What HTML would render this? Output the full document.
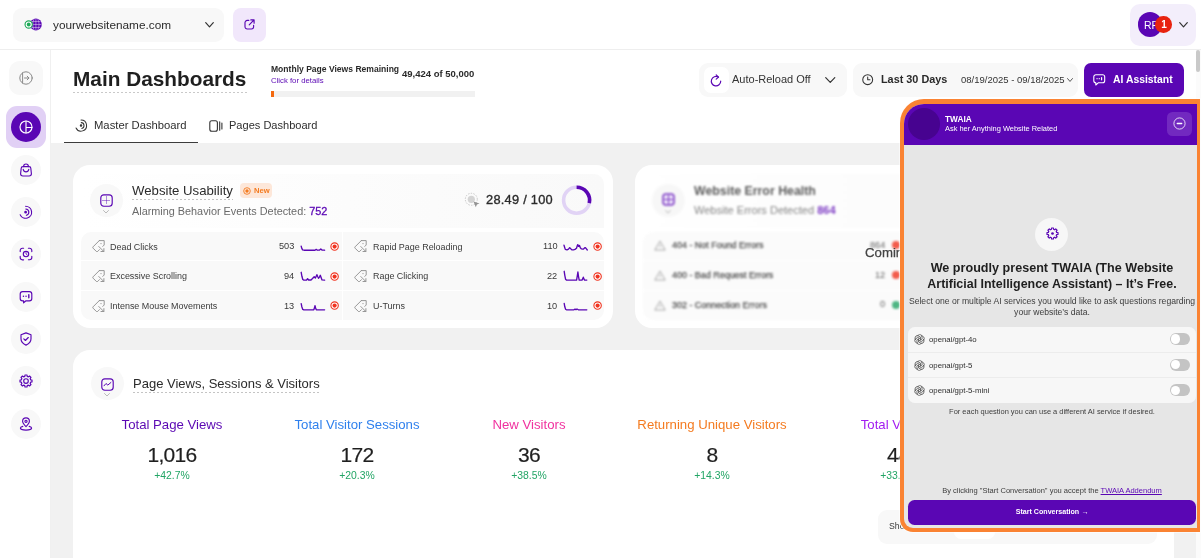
<!DOCTYPE html>
<html lang="en">
<head>
<meta charset="utf-8">
<title>Main Dashboards</title>
<style>
*{box-sizing:border-box;margin:0;padding:0}
html,body{width:1201px;height:558px;overflow:hidden;background:#fff}
body{font-family:"Liberation Sans",sans-serif;color:#252525;position:relative}
.abs{position:absolute}
.t{position:absolute;white-space:nowrap;line-height:1;will-change:transform}
.c{transform:translateX(-50%)}
svg{display:block;overflow:visible}
.card{position:absolute;background:#fff;border-radius:17px}
.sb{position:absolute;border-radius:50%;background:#f8f8f8}
</style>
</head>
<body>
<!-- TOP BAR -->
<div class="abs" style="left:0.00px;top:0.00px;width:1201.00px;height:50.00px;background:#fff;border-bottom:1px solid #eeeeee;"></div>
<div class="abs" style="left:13.00px;top:8.00px;width:211.00px;height:33.50px;background:#f8f8f8;border-radius:9px;"></div>
<div class="abs" style="left:233.00px;top:8.00px;width:33.00px;height:33.50px;background:#f1e7fb;border-radius:8px;"></div>
<div class="abs" style="left:1130.00px;top:4.00px;width:66.00px;height:42.00px;background:#f3eefb;border-radius:10px;"></div>
<svg class="abs" style="left:23.90px;top:18.10px" width="19" height="13" viewBox="0 0 19 13" ><circle cx="11.900" cy="6.500" r="5.900" fill="#5a06b4"/>
<path d="M11.900 .8v11.400M6.200 6.500h11.400M7.400 3.500h9M7.400 9.500h9M10 1.100c-1.700 3.500-1.700 7.300 0 10.800M13.800 1.100c1.700 3.500 1.700 7.300 0 10.800" fill="none" stroke="#fff" stroke-width=".5" opacity=".85"/>
<circle cx="4.700" cy="6.500" r="3.650" fill="#fff" stroke="#1faa59" stroke-width="1.150"/><circle cx="4.700" cy="6.500" r="1.900" fill="#1faa59"/></svg>
<div class="t" style="left:52.90px;top:19.50px;font-size:11.8px;color:#2b2b2b;">yourwebsitename.com</div>
<svg class="abs" style="left:204.50px;top:22.00px" width="9" height="5.5" viewBox="0 0 9 5.5" ><path d="M0.70 0.70L4.50 4.80L8.30 0.70" fill="none" stroke="#333" stroke-width="1.2" stroke-linecap="round" stroke-linejoin="round"/></svg>
<svg class="abs" style="left:244.00px;top:19.00px" width="11" height="11" viewBox="0 0 11 11" ><path d="M4.800 1.400H3.200A2.200 2.200 0 0 0 1 3.600v4.200A2.200 2.200 0 0 0 3.200 10h4.200a2.200 2.200 0 0 0 2.200-2.200V6.200M5.200 5.800l4.600-4.600M6.800.900h3.300v3.300" fill="none" stroke="#5a06b4" stroke-width="1.150" stroke-linecap="round" stroke-linejoin="round"/></svg>
<div class="abs" style="left:1138.00px;top:12.40px;width:24.40px;height:24.40px;background:#5a06b4;border-radius:50%;"></div>
<div class="t" style="left:1144.30px;top:19.65px;font-size:10.5px;color:#fff;">RF</div>
<div class="abs" style="left:1155.40px;top:16.30px;width:16.60px;height:16.60px;background:#e8230f;border-radius:50%;"></div>
<div class="t c" style="left:1163.70px;top:20.30px;font-size:10px;font-weight:700;color:#fff;">1</div>
<svg class="abs" style="left:1178.50px;top:22.00px" width="9" height="5.5" viewBox="0 0 9 5.5" ><path d="M0.70 0.70L4.50 4.80L8.30 0.70" fill="none" stroke="#333" stroke-width="1.2" stroke-linecap="round" stroke-linejoin="round"/></svg>
<!-- SIDEBAR -->
<div class="abs" style="left:0.00px;top:50.00px;width:51.00px;height:508.00px;background:#fff;border-right:1px solid #f0f0f0;"></div>
<div class="abs" style="left:9.00px;top:60.50px;width:33.70px;height:34.50px;background:#f8f8f8;border-radius:11px;"></div>
<svg class="abs" style="left:17.70px;top:69.60px" width="16" height="16" viewBox="0 0 16 16" fill="none" stroke="#8a8a8a" stroke-width="1" stroke-linecap="round" stroke-linejoin="round"><circle cx="8" cy="8" r="6.200"/><path d="M4.600 2.900v10.200M6.500 8h4.300M9.200 6.200L11 8l-1.800 1.800"/></svg>
<div class="abs" style="left:5.50px;top:106.20px;width:40.70px;height:41.80px;background:#e1d0f5;border-radius:11px;"></div>
<div class="abs" style="left:10.70px;top:112.00px;width:30.00px;height:30.00px;background:#5a06b4;border-radius:50%;"></div>
<svg class="abs" style="left:17.70px;top:119.00px" width="16" height="16" viewBox="0 0 16 16" fill="none" stroke="#fff" stroke-width="1.150" stroke-linecap="round" stroke-linejoin="round"><circle cx="8" cy="8" r="6"/><path d="M8 2v12M8 8.500h6"/></svg>
<div class="sb" style="left:10.7px;top:154.5px;width:30px;height:30px"></div>
<svg class="abs" style="left:17.70px;top:161.50px" width="16" height="16" viewBox="0 0 16 16" fill="none" stroke="#5a06b4" stroke-width="1.150" stroke-linecap="round" stroke-linejoin="round"><path d="M3.200 6.200c0-1 .8-1.600 1.800-1.600h6c1 0 1.800.6 1.800 1.600l.6 5.600c0 1.300-1 2.200-2.300 2.200H4.900c-1.300 0-2.300-.9-2.300-2.200z"/><path d="M5.600 4.600c0-1.500 1-2.600 2.400-2.600s2.400 1.100 2.400 2.600M5.200 7.400c.3 1.500 1.400 2.400 2.800 2.400s2.500-.9 2.800-2.400"/></svg>
<div class="sb" style="left:10.7px;top:197.0px;width:30px;height:30px"></div>
<svg class="abs" style="left:17.70px;top:204.00px" width="16" height="16" viewBox="0 0 16 16" fill="none" stroke="#5a06b4" stroke-width="1.150" stroke-linecap="round" stroke-linejoin="round"><path d="M7.600 2.200a6 6 0 1 1-5.400 8.600"/><path d="M7.800 5a3.200 3.200 0 0 1 .6 6.300"/><circle cx="7.600" cy="8.200" r=".8" fill="#5a06b4"/></svg>
<div class="sb" style="left:10.7px;top:239.3px;width:30px;height:30px"></div>
<svg class="abs" style="left:17.70px;top:246.30px" width="16" height="16" viewBox="0 0 16 16" fill="none" stroke="#5a06b4" stroke-width="1.150" stroke-linecap="round" stroke-linejoin="round"><path d="M2.200 5.600V4.400a2.200 2.200 0 0 1 2.200-2.200h1.200M10.400 2.200h1.200a2.200 2.200 0 0 1 2.200 2.200v1.200M13.800 10.400v1.200a2.200 2.200 0 0 1-2.200 2.200h-1.200M5.600 13.800H4.400a2.200 2.200 0 0 1-2.200-2.200v-1.200"/><circle cx="8" cy="8" r="2.700"/><path d="M8 6.600V8l1 .6" stroke-width=".8"/></svg>
<div class="sb" style="left:10.7px;top:281.6px;width:30px;height:30px"></div>
<svg class="abs" style="left:17.70px;top:288.60px" width="16" height="16" viewBox="0 0 16 16" fill="none" stroke="#5a06b4" stroke-width="1.150" stroke-linecap="round" stroke-linejoin="round"><path d="M4.600 2.600h6.800a2.400 2.400 0 0 1 2.400 2.400v4.400a2.400 2.400 0 0 1-2.400 2.400H8l-2.400 2v-2h-1a2.400 2.400 0 0 1-2.400-2.400V5a2.400 2.400 0 0 1 2.400-2.400z"/><path d="M5.400 7.300h.1M8 7.300h.1M10.800 5.800v3" stroke-width="1.400"/></svg>
<div class="sb" style="left:10.7px;top:324.0px;width:30px;height:30px"></div>
<svg class="abs" style="left:17.70px;top:331.00px" width="16" height="16" viewBox="0 0 16 16" fill="none" stroke="#5a06b4" stroke-width="1.150" stroke-linecap="round" stroke-linejoin="round"><path d="M8 1.900l5 1.900v4c0 3-2.100 5.100-5 6.300-2.900-1.200-5-3.300-5-6.300v-4z"/><path d="M5.800 7.900l1.600 1.600 2.900-3"/></svg>
<div class="sb" style="left:10.7px;top:366.2px;width:30px;height:30px"></div>
<svg class="abs" style="left:17.70px;top:373.20px" width="16" height="16" viewBox="0 0 16 16" fill="none" stroke="#5a06b4" stroke-width="1.150" stroke-linecap="round" stroke-linejoin="round"><circle cx="8" cy="8" r="2.300"/><path d="M6.95 1.99L9.05 1.99L9.19 3.35L10.44 3.87L11.51 3.01L12.99 4.49L12.13 5.56L12.65 6.81L14.01 6.95L14.01 9.05L12.65 9.19L12.13 10.44L12.99 11.51L11.51 12.99L10.44 12.13L9.19 12.65L9.05 14.01L6.95 14.01L6.81 12.65L5.56 12.13L4.49 12.99L3.01 11.51L3.87 10.44L3.35 9.19L1.99 9.05L1.99 6.95L3.35 6.81L3.87 5.56L3.01 4.49L4.49 3.01L5.56 3.87L6.81 3.35Z"/></svg>
<div class="sb" style="left:10.7px;top:408.5px;width:30px;height:30px"></div>
<svg class="abs" style="left:17.70px;top:415.50px" width="16" height="16" viewBox="0 0 16 16" fill="none" stroke="#5a06b4" stroke-width="1.150" stroke-linecap="round" stroke-linejoin="round"><path d="M8 10.600c2-2 3.400-3.500 3.400-5.300A3.400 3.400 0 0 0 8 1.900a3.400 3.400 0 0 0-3.400 3.400c0 1.800 1.400 3.300 3.400 5.300z"/><circle cx="8" cy="5.300" r="1.100"/><path d="M4.800 10.400c-1.500.4-2.400 1-2.400 1.700 0 1.200 2.500 2 5.600 2s5.600-.8 5.600-2c0-.7-.9-1.300-2.400-1.700"/></svg>
<!-- MAIN -->
<div class="abs" style="left:51.00px;top:50.00px;width:1144.80px;height:93.00px;background:#fff;"></div>
<div class="abs" style="left:51.00px;top:143.00px;width:1144.80px;height:415.00px;background:#f1f1f1;"></div>
<div class="abs" style="left:1195.80px;top:50.00px;width:5.20px;height:508.00px;background:#fbfbfb;"></div>
<div class="abs" style="left:1196.30px;top:50.00px;width:3.90px;height:22.00px;background:#c9c9c9;border-radius:2px;"></div>
<!-- HEADER -->
<div class="t" style="left:72.50px;top:69.20px;font-size:20.8px;font-weight:700;color:#1f1f1f;">Main Dashboards</div>
<div class="abs" style="left:72.50px;top:92.00px;width:174.00px;height:1.00px;background:repeating-linear-gradient(90deg,#c9c9c9 0 2px,transparent 2px 4px);"></div>
<div class="t" style="left:270.80px;top:64.52px;font-size:8.55px;font-weight:700;color:#2a2a2a;">Monthly Page Views Remaining</div>
<div class="t" style="left:270.80px;top:76.83px;font-size:7.75px;color:#5a06b4;">Click for details</div>
<div class="t" style="left:402.00px;top:69.35px;font-size:9.5px;font-weight:700;color:#2a2a2a;">49,424 of 50,000</div>
<div class="abs" style="left:270.50px;top:90.80px;width:204.00px;height:6.00px;background:#f1f1f1;"></div>
<div class="abs" style="left:270.50px;top:90.80px;width:3.00px;height:6.00px;background:#f4690f;"></div>
<svg class="abs" style="left:73.90px;top:118.00px" width="14.8" height="14.8" viewBox="0 0 16 16" fill="none" stroke="#333" stroke-width="1.100" stroke-linecap="round"><path d="M7.600 2.200a6 6 0 1 1-5.400 8.600"/><path d="M7.800 5a3.200 3.200 0 0 1 .6 6.300"/><circle cx="7.600" cy="8.200" r=".8" fill="#333"/></svg>
<div class="t" style="left:94.00px;top:119.97px;font-size:11.25px;color:#2e2e2e;">Master Dashboard</div>
<div class="abs" style="left:64.20px;top:142.00px;width:134.00px;height:1.00px;background:#3c3c3c;"></div>
<svg class="abs" style="left:208.60px;top:119.50px" width="14" height="12" viewBox="0 0 14 12" fill="none" stroke="#333" stroke-width="1.100" stroke-linecap="round"><rect x=".8" y=".8" width="7.600" height="10.400" rx="2"/><path d="M10.700 1.800v8.400M12.900 3v6"/></svg>
<div class="t" style="left:228.50px;top:120.07px;font-size:11.05px;color:#2e2e2e;">Pages Dashboard</div>
<div class="abs" style="left:699.30px;top:62.70px;width:147.40px;height:34.00px;background:#f8f8f8;border-radius:9px;"></div>
<div class="abs" style="left:704.00px;top:67.30px;width:25.00px;height:25.40px;background:#fff;border-radius:7px;"></div>
<svg class="abs" style="left:710.30px;top:73.50px" width="12" height="13" viewBox="0 0 12 13" fill="none" stroke="#5a06b4" stroke-width="1.200" stroke-linecap="round" stroke-linejoin="round"><path d="M8.300 3.100A4.700 4.700 0 1 0 10.700 7.200"/><path d="M6.200 .8l2.300 2.300-2.300 2"/></svg>
<div class="t" style="left:732.30px;top:74.30px;font-size:11px;color:#333;">Auto-Reload Off</div>
<svg class="abs" style="left:825.00px;top:77.20px" width="10.5" height="6" viewBox="0 0 10.5 6" ><path d="M0.70 0.70L5.25 5.30L9.80 0.70" fill="none" stroke="#333" stroke-width="1.2" stroke-linecap="round" stroke-linejoin="round"/></svg>
<div class="abs" style="left:852.70px;top:62.70px;width:225.60px;height:34.00px;background:#f8f8f8;border-radius:9px;"></div>
<svg class="abs" style="left:862.30px;top:74.30px" width="11.4" height="11.4" viewBox="0 0 12 12" fill="none" stroke="#333" stroke-width="1.100" stroke-linecap="round" stroke-linejoin="round"><circle cx="6" cy="6" r="5.200"/><path d="M6 3.200V6h2.400"/></svg>
<div class="t" style="left:880.70px;top:74.38px;font-size:10.85px;font-weight:700;color:#2a2a2a;">Last 30 Days</div>
<div class="t" style="left:961.30px;top:75.25px;font-size:9.5px;color:#333;">08/19/2025 - 09/18/2025</div>
<svg class="abs" style="left:1066.50px;top:78.30px" width="6" height="4" viewBox="0 0 6 4" ><path d="M0.55 0.55L3.00 3.45L5.45 0.55" fill="none" stroke="#444" stroke-width="0.9" stroke-linecap="round" stroke-linejoin="round"/></svg>
<div class="abs" style="left:1084.00px;top:62.70px;width:99.60px;height:34.00px;background:#5a06b4;border-radius:7px;"></div>
<svg class="abs" style="left:1093.00px;top:74.00px" width="12.5" height="12" viewBox="0 0 12.5 12" fill="none" stroke="#fff" stroke-width="1.100" stroke-linecap="round" stroke-linejoin="round"><path d="M2.800.800h6.900a2 2 0 0 1 2 2v3.900a2 2 0 0 1-2 2H5.500l-2.700 2.300V8.700a2 2 0 0 1-2-2V2.800a2 2 0 0 1 2-2z"/><path d="M4 4.700h.1M6.200 4.700h.1M8.600 3.700v2.100" stroke-width="1.200"/></svg>
<div class="t" style="left:1113.00px;top:74.60px;font-size:10.4px;font-weight:700;color:#fff;">AI Assistant</div>
<!-- CARD 1 -->
<div class="card" style="left:72.5px;top:165px;width:540px;height:163px"></div>
<div class="abs" style="left:81.00px;top:174.00px;width:523.00px;height:54.00px;background:linear-gradient(90deg,#ffffff 0%,#fdfdfd 35%,#f9f9f9 100%);border-radius:10px 10px 0 0;"></div>
<div class="abs" style="left:89.50px;top:184.00px;width:33.00px;height:33.00px;background:#f8f8f8;border-radius:50%;"></div>
<svg class="abs" style="left:99.50px;top:193.50px" width="13" height="13" viewBox="0 0 13 13" fill="none" stroke="#5a06b4" stroke-width="1.150"><rect x=".8" y=".8" width="11.400" height="11.400" rx="3"/><path d="M6.500 2.500v8M2.500 6.500h8" stroke-width=".9" stroke-dasharray="1 1"/></svg>
<svg class="abs" style="left:103.00px;top:209.50px" width="6" height="3.5" viewBox="0 0 6 3.5" ><path d="M0.50 0.50L3.00 3.00L5.50 0.50" fill="none" stroke="#aaa" stroke-width="0.8" stroke-linecap="round" stroke-linejoin="round"/></svg>
<div class="t" style="left:132.00px;top:183.90px;font-size:13.2px;color:#2b2b2b;">Website Usability</div>
<div class="abs" style="left:132.00px;top:198.60px;width:101.00px;height:1.00px;background:repeating-linear-gradient(90deg,#c4c4c4 0 2px,transparent 2px 4px);"></div>
<div class="abs" style="left:240.00px;top:183.00px;width:32.00px;height:15.00px;background:#fde7d9;border-radius:4px;"></div>
<svg class="abs" style="left:243.30px;top:186.80px" width="8" height="8" viewBox="0 0 8 8" ><circle cx="4" cy="4" r="3.300" fill="none" stroke="#f47b20" stroke-width=".9"/><circle cx="4" cy="4" r="1.700" fill="#f47b20"/></svg>
<div class="t" style="left:253.80px;top:186.80px;font-size:7.6px;font-weight:700;color:#f47b20;">New</div>
<div class="t" style="left:132.00px;top:205.97px;font-size:10.85px;color:#6a6a6a;">Alarming Behavior Events Detected: <span style="color:#5a06b4;-webkit-text-stroke:.3px #5a06b4">752</span></div>
<svg class="abs" style="left:464.00px;top:192.00px" width="17" height="17" viewBox="0 0 17 17" fill="none"><circle cx="7.300" cy="7.300" r="6" stroke="#b9b9b9" stroke-width=".8" stroke-dasharray="1.400 1.300"/><circle cx="7.300" cy="7.300" r="3.600" fill="#d4d4d4"/><path d="M9.500 9.500l6 2-2.600 1.100-1.100 2.700z" fill="#929292"/></svg>
<div class="t" style="left:485.80px;top:194.30px;font-size:12.8px;color:#2b2b2b;letter-spacing:.27px;-webkit-text-stroke:.35px #2b2b2b;">28.49 / 100</div>
<svg class="abs" style="left:0;top:0" width="1201" height="558" fill="none"><circle cx="576.6" cy="200.2" r="13.0" stroke="#e1d3f5" stroke-width="3.600"/><path d="M576.6 187.2A13.0 13.0 0 0 1 589.29 203.03" stroke="#5a06b4" stroke-width="3.600"/></svg>
<div class="abs" style="left:81.00px;top:232.00px;width:260.70px;height:28.40px;background:#f9f9f9;border-radius:10px 0 0 0;"></div>
<svg class="abs" style="left:91.50px;top:240.35px" width="13" height="12.5" viewBox="0 0 13 12.5" fill="none" stroke="#8b8b8b" stroke-width=".9" stroke-linecap="round" stroke-linejoin="round"><path d="M7.300 .6h4.900v4.400l-1.400 1.400M7.300 .6L1.100 6.800a1 1 0 0 0 0 1.400L4.300 11.400a1 1 0 0 0 1.400 0L7.500 9.600M6.800 6.500l4.900 4.900M11.900 8.600v2.900h-2.900"/><circle cx="9" cy="3.600" r=".55" fill="#8b8b8b" stroke="none"/></svg>
<div class="t" style="left:109.90px;top:242.58px;font-size:8.95px;color:#3a3a3a;">Dead Clicks</div>
<div class="t" style="right:906.70px;top:242.35px;font-size:9.2px;color:#3a3a3a;">503</div>
<svg class="abs" style="left:0;top:0" width="1201" height="558"><path d="M301.2 246.2 L301.8 248.4 L302.6 249.9 L304.0 250.2 L315.0 250.2 L316.2 249.4 L317.4 250.2 L319.6 250.1 L320.8 248.9 L322.0 250.1 L324.6 250.2" fill="none" stroke="#5a06b4" stroke-width="1.350" stroke-linejoin="round" stroke-linecap="round"/></svg>
<svg class="abs" style="left:329.70px;top:241.65px" width="9.2" height="9.2" viewBox="0 0 9.2 9.2" ><circle cx="4.600" cy="4.600" r="3.700" fill="#fff" stroke="#f03420" stroke-width="1.100"/><circle cx="4.600" cy="4.600" r="2.100" fill="#f03420"/></svg>
<div class="abs" style="left:81.00px;top:261.30px;width:260.70px;height:28.80px;background:#f9f9f9;border-radius:0;"></div>
<svg class="abs" style="left:91.50px;top:270.20px" width="13" height="12.5" viewBox="0 0 13 12.5" fill="none" stroke="#8b8b8b" stroke-width=".9" stroke-linecap="round" stroke-linejoin="round"><path d="M7.300 .6h4.900v4.400l-1.400 1.400M7.300 .6L1.100 6.800a1 1 0 0 0 0 1.400L4.300 11.400a1 1 0 0 0 1.400 0L7.500 9.600M6.800 6.500l4.900 4.900M11.900 8.600v2.900h-2.900"/><circle cx="9" cy="3.600" r=".55" fill="#8b8b8b" stroke="none"/></svg>
<div class="t" style="left:109.90px;top:272.43px;font-size:8.95px;color:#3a3a3a;">Excessive Scrolling</div>
<div class="t" style="right:906.70px;top:272.20px;font-size:9.2px;color:#3a3a3a;">94</div>
<svg class="abs" style="left:0;top:0" width="1201" height="558"><path d="M301.2 272.3 L301.9 276.3 L302.8 279.5 L303.8 280.1 L306.6 280.0 L307.6 278.7 L308.6 280.0 L311.0 280.0 L312.5 278.5 L314.2 276.7 L315.4 278.1 L316.9 274.7 L317.8 276.8 L318.5 278.3 L319.4 277.1 L320.3 275.3 L321.2 277.8 L322.0 279.9 L324.6 280.1" fill="none" stroke="#5a06b4" stroke-width="1.350" stroke-linejoin="round" stroke-linecap="round"/></svg>
<svg class="abs" style="left:329.70px;top:271.50px" width="9.2" height="9.2" viewBox="0 0 9.2 9.2" ><circle cx="4.600" cy="4.600" r="3.700" fill="#fff" stroke="#f03420" stroke-width="1.100"/><circle cx="4.600" cy="4.600" r="2.100" fill="#f03420"/></svg>
<div class="abs" style="left:81.00px;top:291.00px;width:260.70px;height:29.00px;background:#f9f9f9;border-radius:0 0 0 10px;"></div>
<svg class="abs" style="left:91.50px;top:299.90px" width="13" height="12.5" viewBox="0 0 13 12.5" fill="none" stroke="#8b8b8b" stroke-width=".9" stroke-linecap="round" stroke-linejoin="round"><path d="M7.300 .6h4.900v4.400l-1.400 1.400M7.300 .6L1.100 6.800a1 1 0 0 0 0 1.400L4.300 11.400a1 1 0 0 0 1.400 0L7.500 9.600M6.800 6.500l4.900 4.900M11.900 8.600v2.900h-2.900"/><circle cx="9" cy="3.600" r=".55" fill="#8b8b8b" stroke="none"/></svg>
<div class="t" style="left:109.90px;top:302.12px;font-size:8.95px;color:#3a3a3a;">Intense Mouse Movements</div>
<div class="t" style="right:906.70px;top:301.90px;font-size:9.2px;color:#3a3a3a;">13</div>
<svg class="abs" style="left:0;top:0" width="1201" height="558"><path d="M301.2 303.7 L301.9 307.0 L302.8 309.4 L303.8 309.8 L313.8 309.8 L314.5 307.8 L315.0 305.6 L315.6 308.0 L316.3 309.8 L324.6 309.8" fill="none" stroke="#5a06b4" stroke-width="1.350" stroke-linejoin="round" stroke-linecap="round"/></svg>
<svg class="abs" style="left:329.70px;top:301.20px" width="9.2" height="9.2" viewBox="0 0 9.2 9.2" ><circle cx="4.600" cy="4.600" r="3.700" fill="#fff" stroke="#f03420" stroke-width="1.100"/><circle cx="4.600" cy="4.600" r="2.100" fill="#f03420"/></svg>
<div class="abs" style="left:343.40px;top:232.00px;width:261.00px;height:28.40px;background:#f9f9f9;border-radius:0 10px 0 0;"></div>
<svg class="abs" style="left:354.30px;top:240.35px" width="13" height="12.5" viewBox="0 0 13 12.5" fill="none" stroke="#8b8b8b" stroke-width=".9" stroke-linecap="round" stroke-linejoin="round"><path d="M7.300 .6h4.900v4.400l-1.400 1.400M7.300 .6L1.100 6.800a1 1 0 0 0 0 1.400L4.300 11.400a1 1 0 0 0 1.400 0L7.500 9.600M6.800 6.500l4.900 4.900M11.900 8.600v2.900h-2.900"/><circle cx="9" cy="3.600" r=".55" fill="#8b8b8b" stroke="none"/></svg>
<div class="t" style="left:372.50px;top:242.58px;font-size:8.95px;color:#3a3a3a;">Rapid Page Reloading</div>
<div class="t" style="right:643.70px;top:242.35px;font-size:9.2px;color:#3a3a3a;">110</div>
<svg class="abs" style="left:0;top:0" width="1201" height="558"><path d="M564.0 245.2 L564.6 247.2 L565.3 249.4 L567.0 249.8 L568.5 249.1 L569.7 247.6 L571.0 249.1 L571.8 249.8 L573.5 249.8 L575.0 249.4 L576.5 248.2 L577.3 245.6 L577.8 244.6 L578.6 246.4 L579.5 245.5 L580.3 247.8 L581.5 248.9 L583.0 249.2 L584.0 248.6 L585.1 247.6 L586.2 248.6 L587.3 250.0" fill="none" stroke="#5a06b4" stroke-width="1.350" stroke-linejoin="round" stroke-linecap="round"/></svg>
<svg class="abs" style="left:592.50px;top:241.65px" width="9.2" height="9.2" viewBox="0 0 9.2 9.2" ><circle cx="4.600" cy="4.600" r="3.700" fill="#fff" stroke="#f03420" stroke-width="1.100"/><circle cx="4.600" cy="4.600" r="2.100" fill="#f03420"/></svg>
<div class="abs" style="left:343.40px;top:261.30px;width:261.00px;height:28.80px;background:#f9f9f9;border-radius:0;"></div>
<svg class="abs" style="left:354.30px;top:270.20px" width="13" height="12.5" viewBox="0 0 13 12.5" fill="none" stroke="#8b8b8b" stroke-width=".9" stroke-linecap="round" stroke-linejoin="round"><path d="M7.300 .6h4.900v4.400l-1.400 1.400M7.300 .6L1.100 6.800a1 1 0 0 0 0 1.400L4.300 11.400a1 1 0 0 0 1.400 0L7.500 9.600M6.800 6.500l4.900 4.900M11.900 8.600v2.900h-2.900"/><circle cx="9" cy="3.600" r=".55" fill="#8b8b8b" stroke="none"/></svg>
<div class="t" style="left:372.50px;top:272.43px;font-size:8.95px;color:#3a3a3a;">Rage Clicking</div>
<div class="t" style="right:643.70px;top:272.20px;font-size:9.2px;color:#3a3a3a;">22</div>
<svg class="abs" style="left:0;top:0" width="1201" height="558"><path d="M564.2 271.3 L564.8 275.3 L565.6 279.3 L566.4 280.1 L576.6 280.1 L577.3 275.8 L577.9 272.0 L578.5 276.3 L579.2 280.1 L582.0 280.1 L582.8 278.7 L583.3 277.2 L583.9 278.9 L584.6 280.1 L586.8 280.1" fill="none" stroke="#5a06b4" stroke-width="1.350" stroke-linejoin="round" stroke-linecap="round"/></svg>
<svg class="abs" style="left:592.50px;top:271.50px" width="9.2" height="9.2" viewBox="0 0 9.2 9.2" ><circle cx="4.600" cy="4.600" r="3.700" fill="#fff" stroke="#f03420" stroke-width="1.100"/><circle cx="4.600" cy="4.600" r="2.100" fill="#f03420"/></svg>
<div class="abs" style="left:343.40px;top:291.00px;width:261.00px;height:29.00px;background:#f9f9f9;border-radius:0 0 10px 0;"></div>
<svg class="abs" style="left:354.30px;top:299.90px" width="13" height="12.5" viewBox="0 0 13 12.5" fill="none" stroke="#8b8b8b" stroke-width=".9" stroke-linecap="round" stroke-linejoin="round"><path d="M7.300 .6h4.900v4.400l-1.400 1.400M7.300 .6L1.100 6.800a1 1 0 0 0 0 1.400L4.300 11.400a1 1 0 0 0 1.400 0L7.500 9.600M6.800 6.500l4.900 4.900M11.900 8.600v2.900h-2.900"/><circle cx="9" cy="3.600" r=".55" fill="#8b8b8b" stroke="none"/></svg>
<div class="t" style="left:372.50px;top:302.12px;font-size:8.95px;color:#3a3a3a;">U-Turns</div>
<div class="t" style="right:643.70px;top:301.90px;font-size:9.2px;color:#3a3a3a;">10</div>
<svg class="abs" style="left:0;top:0" width="1201" height="558"><path d="M564.2 303.4 L564.8 306.8 L565.6 309.3 L566.4 309.8 L574.0 309.8 L575.0 309.1 L576.0 309.7 L577.0 309.0 L578.3 309.8 L586.8 309.8" fill="none" stroke="#5a06b4" stroke-width="1.350" stroke-linejoin="round" stroke-linecap="round"/></svg>
<svg class="abs" style="left:592.50px;top:301.20px" width="9.2" height="9.2" viewBox="0 0 9.2 9.2" ><circle cx="4.600" cy="4.600" r="3.700" fill="#fff" stroke="#f03420" stroke-width="1.100"/><circle cx="4.600" cy="4.600" r="2.100" fill="#f03420"/></svg>
<!-- CARD 2 (blurred, coming soon) -->
<div class="card" style="left:634.5px;top:165px;width:540px;height:163px"></div>
<div class="abs" style="left:0;top:0;width:1201px;height:558px;filter:blur(1.1px);opacity:.8">
<div class="abs" style="left:643.00px;top:174.00px;width:523.00px;height:54.00px;background:linear-gradient(90deg,#ffffff 0%,#fdfdfd 35%,#f9f9f9 100%);border-radius:10px 10px 0 0;"></div>
<div class="abs" style="left:651.50px;top:184.00px;width:33.00px;height:33.00px;background:#f6f6f6;border-radius:50%;"></div>
<svg class="abs" style="left:661.50px;top:193.30px" width="13" height="13" viewBox="0 0 13 13" ><rect x="1" y="1" width="11" height="11" rx="3" fill="#e9dcf8" stroke="#5a06b4" stroke-width="1.500"/><path d="M6.500 2v9M2 6.500h9" stroke="#5a06b4" stroke-width="1"/></svg>
<svg class="abs" style="left:665.00px;top:209.50px" width="6" height="3.5" viewBox="0 0 6 3.5" ><path d="M0.55 0.55L3.00 2.95L5.45 0.55" fill="none" stroke="#999" stroke-width="0.9" stroke-linecap="round" stroke-linejoin="round"/></svg>
<div class="t" style="left:693.50px;top:184.72px;font-size:12.35px;font-weight:700;color:#333;">Website Error Health</div>
<div class="t" style="left:693.50px;top:204.88px;font-size:11.05px;color:#666;">Website Errors Detected <span style="color:#5a06b4;font-weight:700">864</span></div>
<div class="abs" style="left:643.00px;top:232.00px;width:523.00px;height:28.40px;background:#fafafa;border-radius:10px 10px 0 0;"></div>
<svg class="abs" style="left:654.00px;top:239.95px" width="12" height="11" viewBox="0 0 12 11" fill="none" stroke="#8b8b8b" stroke-width=".9" stroke-linejoin="round"><path d="M6 1L11.200 10H.800z"/><path d="M6 4.500v2.500M6 8.300v.2"/></svg>
<div class="t" style="left:672.00px;top:241.47px;font-size:8.95px;color:#222;-webkit-text-stroke:.25px #222;">404 - Not Found Errors</div>
<div class="t" style="right:315.40px;top:240.85px;font-size:9.2px;color:#3a3a3a;">864</div>
<div class="abs" style="left:892.00px;top:241.45px;width:8.00px;height:8.00px;background:#f03420;border-radius:50%;"></div>
<div class="abs" style="left:643.00px;top:261.30px;width:523.00px;height:28.80px;background:#fafafa;border-radius:0;"></div>
<svg class="abs" style="left:654.00px;top:269.80px" width="12" height="11" viewBox="0 0 12 11" fill="none" stroke="#8b8b8b" stroke-width=".9" stroke-linejoin="round"><path d="M6 1L11.200 10H.800z"/><path d="M6 4.500v2.500M6 8.300v.2"/></svg>
<div class="t" style="left:672.00px;top:271.32px;font-size:8.95px;color:#222;-webkit-text-stroke:.25px #222;">400 - Bad Request Errors</div>
<div class="t" style="right:315.40px;top:270.70px;font-size:9.2px;color:#3a3a3a;">12</div>
<div class="abs" style="left:892.00px;top:271.30px;width:8.00px;height:8.00px;background:#f03420;border-radius:50%;"></div>
<div class="abs" style="left:643.00px;top:291.00px;width:523.00px;height:29.00px;background:#fafafa;border-radius:0 0 10px 10px;"></div>
<svg class="abs" style="left:654.00px;top:299.50px" width="12" height="11" viewBox="0 0 12 11" fill="none" stroke="#8b8b8b" stroke-width=".9" stroke-linejoin="round"><path d="M6 1L11.200 10H.800z"/><path d="M6 4.500v2.500M6 8.300v.2"/></svg>
<div class="t" style="left:672.00px;top:301.02px;font-size:8.95px;color:#222;-webkit-text-stroke:.25px #222;">302 - Connection Errors</div>
<div class="t" style="right:315.40px;top:300.40px;font-size:9.2px;color:#3a3a3a;">0</div>
<div class="abs" style="left:892.00px;top:301.00px;width:8.00px;height:8.00px;background:#22a565;border-radius:50%;"></div>
</div>
<div class="t c" style="left:904.50px;top:245.50px;font-size:13.2px;color:#444;-webkit-text-stroke:.25px #444;">Coming Soon</div>
<!-- CARD 3 -->
<div class="card" style="left:72.7px;top:349.8px;width:1101.6px;height:240px"></div>
<div class="abs" style="left:90.70px;top:367.30px;width:33.00px;height:33.00px;background:#f8f8f8;border-radius:50%;"></div>
<svg class="abs" style="left:100.70px;top:377.50px" width="13" height="13" viewBox="0 0 13 13" fill="none" stroke="#5a06b4" stroke-width="1.150" stroke-linecap="round" stroke-linejoin="round"><rect x=".8" y=".8" width="11.400" height="11.400" rx="3"/><path d="M3 7.800l2-2.300 1.800 1.600L9.900 4.500" stroke-width="1"/></svg>
<svg class="abs" style="left:104.20px;top:393.00px" width="6" height="3.5" viewBox="0 0 6 3.5" ><path d="M0.50 0.50L3.00 3.00L5.50 0.50" fill="none" stroke="#aaa" stroke-width="0.8" stroke-linecap="round" stroke-linejoin="round"/></svg>
<div class="t" style="left:132.60px;top:376.80px;font-size:13px;color:#2b2b2b;">Page Views, Sessions &amp; Visitors</div>
<div class="abs" style="left:132.60px;top:392.20px;width:187.00px;height:1.00px;background:repeating-linear-gradient(90deg,#c4c4c4 0 2px,transparent 2px 4px);"></div>
<div class="t c" style="left:171.90px;top:418.20px;font-size:13.2px;color:#5b08b3;">Total Page Views</div>
<div class="t c" style="left:171.90px;top:444.30px;font-size:21px;color:#1f1f1f;letter-spacing:-.7px;-webkit-text-stroke:.2px #1f1f1f;">1,016</div>
<div class="t c" style="left:171.90px;top:471.10px;font-size:10.4px;color:#22a565;">+42.7%</div>
<div class="t c" style="left:356.90px;top:418.20px;font-size:13.2px;color:#2f80ed;">Total Visitor Sessions</div>
<div class="t c" style="left:356.90px;top:444.30px;font-size:21px;color:#1f1f1f;letter-spacing:-.7px;-webkit-text-stroke:.2px #1f1f1f;">172</div>
<div class="t c" style="left:356.90px;top:471.10px;font-size:10.4px;color:#22a565;">+20.3%</div>
<div class="t c" style="left:529.00px;top:418.20px;font-size:13.2px;color:#f0329f;">New Visitors</div>
<div class="t c" style="left:529.00px;top:444.30px;font-size:21px;color:#1f1f1f;letter-spacing:-.7px;-webkit-text-stroke:.2px #1f1f1f;">36</div>
<div class="t c" style="left:529.00px;top:471.10px;font-size:10.4px;color:#22a565;">+38.5%</div>
<div class="t c" style="left:712.40px;top:418.20px;font-size:13.2px;color:#f47b20;">Returning Unique Visitors</div>
<div class="t c" style="left:712.40px;top:444.30px;font-size:21px;color:#1f1f1f;letter-spacing:-.7px;-webkit-text-stroke:.2px #1f1f1f;">8</div>
<div class="t c" style="left:712.40px;top:471.10px;font-size:10.4px;color:#22a565;">+14.3%</div>
<div class="t c" style="left:897.50px;top:418.20px;font-size:13.2px;color:#a21cf0;">Total Visitors</div>
<div class="t c" style="left:897.50px;top:444.30px;font-size:21px;color:#1f1f1f;letter-spacing:-.7px;-webkit-text-stroke:.2px #1f1f1f;">44</div>
<div class="t c" style="left:897.50px;top:471.10px;font-size:10.4px;color:#22a565;">+33.3%</div>
<div class="t c" style="left:1085.00px;top:418.20px;font-size:13.2px;color:#0fa968;">Unique Visitors</div>
<div class="t c" style="left:1085.00px;top:444.30px;font-size:21px;color:#1f1f1f;letter-spacing:-.7px;-webkit-text-stroke:.2px #1f1f1f;">28</div>
<div class="t c" style="left:1085.00px;top:471.10px;font-size:10.4px;color:#22a565;">+21.7%</div>
<div class="abs" style="left:878.40px;top:510.00px;width:278.40px;height:33.60px;background:#f8f8f8;border-radius:9px;"></div>
<div class="t" style="left:888.60px;top:522.25px;font-size:8.7px;color:#3a3a3a;">Show</div>
<div class="abs" style="left:954.00px;top:514.00px;width:40.50px;height:25.00px;background:#fff;border-radius:7px;"></div>
<!-- TWAIA PANEL -->
<div class="abs" style="left:899.70px;top:99.40px;width:300.50px;height:432.70px;background:#fa8333;border-radius:24px 0 0 13px;box-shadow:0 0 0 1px rgba(255,255,255,.5);"></div>
<div class="abs" style="left:903.8px;top:103.5px;width:292.8px;height:424.9px;background:#e6e6e6;border-radius:20px 0 0 9px;overflow:hidden"><div class="abs" style="left:0;top:0;width:294px;height:41px;background:#5a06b4"></div></div>
<div class="abs" style="left:907.70px;top:107.60px;width:32.60px;height:32.60px;background:#470390;border-radius:50%;"></div>
<div class="t" style="left:945.00px;top:115.25px;font-size:8.3px;font-weight:700;color:#fff;">TWAIA</div>
<div class="t" style="left:945.00px;top:125.38px;font-size:7.45px;color:#fff;">Ask her Anything Website Related</div>
<div class="abs" style="left:1167.10px;top:111.50px;width:25.10px;height:24.80px;background:#7229c0;border-radius:5.5px;"></div>
<svg class="abs" style="left:1173.30px;top:117.20px" width="13" height="13" viewBox="0 0 13 13" fill="none" stroke="#fff"><circle cx="6.500" cy="6.500" r="5.600" stroke-width=".8"/><path d="M4.300 6.500h4.400" stroke-width="1.400" stroke-linecap="round"/></svg>
<div class="abs" style="left:1035.40px;top:217.50px;width:33.00px;height:33.00px;background:#f7f7f7;border-radius:50%;"></div>
<svg class="abs" style="left:1045.70px;top:227.40px" width="13" height="13" viewBox="0 0 13 13" ><path d="M5.54 0.98L7.46 0.98L7.57 2.34L8.69 2.80L9.72 1.92L11.08 3.28L10.20 4.31L10.66 5.43L12.02 5.54L12.02 7.46L10.66 7.57L10.20 8.69L11.08 9.72L9.72 11.08L8.69 10.20L7.57 10.66L7.46 12.02L5.54 12.02L5.43 10.66L4.31 10.20L3.28 11.08L1.92 9.72L2.80 8.69L2.34 7.57L0.98 7.46L0.98 5.54L2.34 5.43L2.80 4.31L1.92 3.28L3.28 1.92L4.31 2.80L5.43 2.34Z" fill="none" stroke="#5a06b4" stroke-width="1.150" stroke-linejoin="round"/><circle cx="6.500" cy="6.500" r="1.350" fill="#5a06b4"/></svg>
<div class="t c" style="left:1051.90px;top:261.80px;font-size:12.6px;font-weight:700;color:#1f1f1f;">We proudly present TWAIA (The Website</div>
<div class="t c" style="left:1051.70px;top:277.77px;font-size:12.45px;font-weight:700;color:#1f1f1f;">Artificial Intelligence Assistant) – It’s Free.</div>
<div class="t c" style="left:1052.00px;top:296.90px;font-size:8.6px;color:#3c3c3c;">Select one or multiple AI services you would like to ask questions regarding</div>
<div class="t c" style="left:1052.00px;top:307.50px;font-size:8.6px;color:#3c3c3c;">your website’s data.</div>
<div class="abs" style="left:907.60px;top:326.80px;width:288.20px;height:76.40px;background:#ececec;border-radius:7px;"></div>
<div class="abs" style="left:907.60px;top:326.80px;width:288.20px;height:25.10px;background:#f7f7f7;border-radius:7px 7px 0 0;"></div>
<svg class="abs" style="left:913.90px;top:333.85px" width="11" height="11" viewBox="0 0 11 11" fill="none" stroke="#4a4a4a" stroke-width=".7" stroke-linecap="round" stroke-linejoin="round"><path d="M3.300 2.100a2.700 2.700 0 0 1 4.700 -.3l.100 3.300-2.200 1.300" transform="rotate(0 5.500 5.500)"/><path d="M3.300 2.100a2.700 2.700 0 0 1 4.700 -.3l.100 3.300-2.200 1.300" transform="rotate(60 5.500 5.500)"/><path d="M3.300 2.100a2.700 2.700 0 0 1 4.700 -.3l.100 3.300-2.200 1.300" transform="rotate(120 5.500 5.500)"/><path d="M3.300 2.100a2.700 2.700 0 0 1 4.700 -.3l.100 3.300-2.200 1.300" transform="rotate(180 5.500 5.500)"/><path d="M3.300 2.100a2.700 2.700 0 0 1 4.700 -.3l.100 3.300-2.200 1.300" transform="rotate(240 5.500 5.500)"/><path d="M3.300 2.100a2.700 2.700 0 0 1 4.700 -.3l.100 3.300-2.200 1.300" transform="rotate(300 5.500 5.500)"/></svg>
<div class="t" style="left:929.00px;top:335.95px;font-size:7.8px;color:#2e2e2e;">openai/gpt-4o</div>
<div class="abs" style="left:1169.50px;top:333.05px;width:20.50px;height:12.00px;background:#c4c4c4;border-radius:6px;"></div>
<div class="abs" style="left:1170.90px;top:334.40px;width:9.30px;height:9.30px;background:#fff;border-radius:50%;"></div>
<div class="abs" style="left:907.60px;top:352.60px;width:288.20px;height:24.80px;background:#f7f7f7;border-radius:0;"></div>
<svg class="abs" style="left:913.90px;top:359.50px" width="11" height="11" viewBox="0 0 11 11" fill="none" stroke="#4a4a4a" stroke-width=".7" stroke-linecap="round" stroke-linejoin="round"><path d="M3.300 2.100a2.700 2.700 0 0 1 4.700 -.3l.100 3.300-2.200 1.300" transform="rotate(0 5.500 5.500)"/><path d="M3.300 2.100a2.700 2.700 0 0 1 4.700 -.3l.100 3.300-2.200 1.300" transform="rotate(60 5.500 5.500)"/><path d="M3.300 2.100a2.700 2.700 0 0 1 4.700 -.3l.100 3.300-2.200 1.300" transform="rotate(120 5.500 5.500)"/><path d="M3.300 2.100a2.700 2.700 0 0 1 4.700 -.3l.100 3.300-2.200 1.300" transform="rotate(180 5.500 5.500)"/><path d="M3.300 2.100a2.700 2.700 0 0 1 4.700 -.3l.100 3.300-2.200 1.300" transform="rotate(240 5.500 5.500)"/><path d="M3.300 2.100a2.700 2.700 0 0 1 4.700 -.3l.100 3.300-2.200 1.300" transform="rotate(300 5.500 5.500)"/></svg>
<div class="t" style="left:929.00px;top:361.60px;font-size:7.8px;color:#2e2e2e;">openai/gpt-5</div>
<div class="abs" style="left:1169.50px;top:358.70px;width:20.50px;height:12.00px;background:#c4c4c4;border-radius:6px;"></div>
<div class="abs" style="left:1170.90px;top:360.05px;width:9.30px;height:9.30px;background:#fff;border-radius:50%;"></div>
<div class="abs" style="left:907.60px;top:378.10px;width:288.20px;height:25.10px;background:#f7f7f7;border-radius:0 0 7px 7px;"></div>
<svg class="abs" style="left:913.90px;top:385.15px" width="11" height="11" viewBox="0 0 11 11" fill="none" stroke="#4a4a4a" stroke-width=".7" stroke-linecap="round" stroke-linejoin="round"><path d="M3.300 2.100a2.700 2.700 0 0 1 4.700 -.3l.100 3.300-2.200 1.300" transform="rotate(0 5.500 5.500)"/><path d="M3.300 2.100a2.700 2.700 0 0 1 4.700 -.3l.100 3.300-2.200 1.300" transform="rotate(60 5.500 5.500)"/><path d="M3.300 2.100a2.700 2.700 0 0 1 4.700 -.3l.100 3.300-2.200 1.300" transform="rotate(120 5.500 5.500)"/><path d="M3.300 2.100a2.700 2.700 0 0 1 4.700 -.3l.100 3.300-2.200 1.300" transform="rotate(180 5.500 5.500)"/><path d="M3.300 2.100a2.700 2.700 0 0 1 4.700 -.3l.100 3.300-2.200 1.300" transform="rotate(240 5.500 5.500)"/><path d="M3.300 2.100a2.700 2.700 0 0 1 4.700 -.3l.100 3.300-2.200 1.300" transform="rotate(300 5.500 5.500)"/></svg>
<div class="t" style="left:929.00px;top:387.25px;font-size:7.8px;color:#2e2e2e;">openai/gpt-5-mini</div>
<div class="abs" style="left:1169.50px;top:384.35px;width:20.50px;height:12.00px;background:#c4c4c4;border-radius:6px;"></div>
<div class="abs" style="left:1170.90px;top:385.70px;width:9.30px;height:9.30px;background:#fff;border-radius:50%;"></div>
<div class="t c" style="left:1051.90px;top:407.77px;font-size:7.46px;color:#3c3c3c;">For each question you can use a different AI service if desired.</div>
<div class="t c" style="left:1051.90px;top:486.73px;font-size:7.54px;color:#3c3c3c;">By clicking "Start Conversation" you accept the <span style="color:#5a06b4;text-decoration:underline">TWAIA Addendum</span></div>
<div class="abs" style="left:907.60px;top:499.80px;width:288.20px;height:24.80px;background:#5a06b4;border-radius:6.5px;"></div>
<div class="t c" style="left:1051.70px;top:508.85px;font-size:7.1px;font-weight:700;color:#fff;">Start Conversation →</div>
</body>
</html>
